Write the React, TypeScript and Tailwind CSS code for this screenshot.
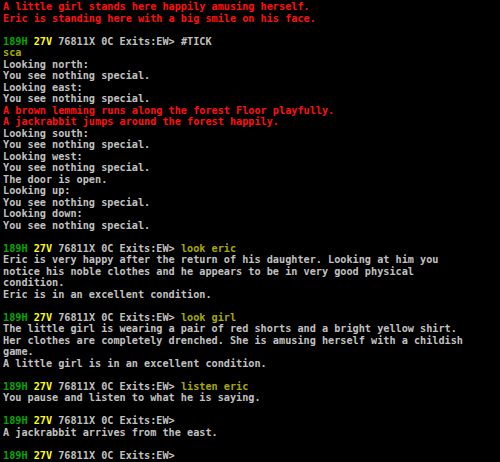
type Seg = { t: string; c: string };

const G = "text-[#00a800]";
const Y = "text-[#ffff00]";
const W = "text-[#c0c0c0]";
const O = "text-[#a8a800]";
const R = "text-[#ff1010]";

const prompt = (cmd?: string, cmdColor: string = O): Seg[] => {
  const segs: Seg[] = [
    { t: "189H ", c: G },
    { t: "27V ", c: Y },
    { t: "76811X 0C Exits:EW> ", c: W },
  ];
  if (cmd) segs.push({ t: cmd, c: cmdColor });
  return segs;
};

const line = (t: string, c: string = W): Seg[] => [{ t, c }];

const lines: Seg[][] = [
  line("A little girl stands here happily amusing herself.", R),
  line("Eric is standing here with a big smile on his face.", R),
  [],
  prompt("#TICK", W),
  line("sca", O),
  line("Looking north:"),
  line("You see nothing special."),
  line("Looking east:"),
  line("You see nothing special."),
  line("A brown lemming runs along the forest Floor playfully.", R),
  line("A jackrabbit jumps around the forest happily.", R),
  line("Looking south:"),
  line("You see nothing special."),
  line("Looking west:"),
  line("You see nothing special."),
  line("The door is open."),
  line("Looking up:"),
  line("You see nothing special."),
  line("Looking down:"),
  line("You see nothing special."),
  [],
  prompt("look eric"),
  line("Eric is very happy after the return of his daughter. Looking at him you"),
  line("notice his noble clothes and he appears to be in very good physical"),
  line("condition."),
  line("Eric is in an excellent condition."),
  [],
  prompt("look girl"),
  line("The little girl is wearing a pair of red shorts and a bright yellow shirt."),
  line("Her clothes are completely drenched. She is amusing herself with a childish"),
  line("game."),
  line("A little girl is in an excellent condition."),
  [],
  prompt("listen eric"),
  line("You pause and listen to what he is saying."),
  [],
  prompt(),
  line("A jackrabbit arrives from the east."),
  [],
  prompt(),
];

export default function App() {
  return (
    <div className="h-[462px] w-[500px] overflow-hidden bg-black pl-[3px] pt-[1px]">
      <div className="font-['DejaVu_Sans_Mono','Liberation_Mono',monospace] text-[10.2px] leading-[11.5px] font-bold whitespace-pre">
        {lines.map((segs, i) => (
          <div key={i} className="h-[11.5px]">
            {segs.map((s, j) => (
              <span key={j} className={s.c}>
                {s.t}
              </span>
            ))}
          </div>
        ))}
      </div>
    </div>
  );
}
